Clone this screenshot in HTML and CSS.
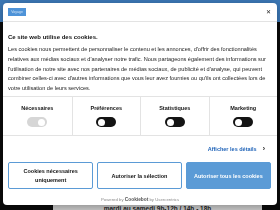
FILE: index.html
```html
<!DOCTYPE html>
<html lang="fr">
<head>
<meta charset="utf-8">
<link rel="stylesheet" href="styles.css">
</head>
<body>
<div class="page">
  <div class="site-header"></div>
  <div class="site-main"></div>
  <div class="hours">mardi au samedi 9h-12h / 14h - 18h</div>
</div>
<div class="dialog">
  <div class="dialog-header">
    <div class="logo">Voyage</div>
    <div class="close">&#x2715;</div>
  </div>
  <div class="dialog-body">
    <h2 class="title">Ce site web utilise des cookies.</h2>
    <p class="text">Les cookies nous permettent de personnaliser le contenu et les annonces, d'offrir des fonctionnalités relatives aux médias sociaux et d'analyser notre trafic. Nous partageons également des informations sur l'utilisation de notre site avec nos partenaires de médias sociaux, de publicité et d'analyse, qui peuvent combiner celles-ci avec d'autres informations que vous leur avez fournies ou qu'ils ont collectées lors de votre utilisation de leurs services.</p>
  </div>
  <div class="cats">
    <div class="cat"><span class="cat-label">Nécessaires</span><span class="toggle on disabled"></span></div>
    <div class="cat"><span class="cat-label">Préférences</span><span class="toggle"></span></div>
    <div class="cat"><span class="cat-label">Statistiques</span><span class="toggle"></span></div>
    <div class="cat"><span class="cat-label">Marketing</span><span class="toggle"></span></div>
  </div>
  <div class="details-row"><span class="details">Afficher les détails</span><span class="chev">&#x203A;</span></div>
  <div class="buttons">
    <div class="btn">Cookies nécessaires<br>uniquement</div>
    <div class="btn">Autoriser la sélection</div>
    <div class="btn primary">Autoriser tous les cookies</div>
  </div>
  <div class="powered">Powered by <b>Cookiebot</b> by Usercentrics</div>
</div>
</body>
</html>
```
FILE: styles.css
```css
html, body {
  margin: 0;
  padding: 0;
}
body {
  width: 280px;
  height: 210px;
  overflow: hidden;
  background: #0b0b0b;
  font-family: "Liberation Sans", Arial, sans-serif;
}
.page {
  display: flex;
  flex-direction: column;
  height: 210px;
}
.site-header {
  height: 22px;
  background: #3c78b6;
}
.site-main {
  flex: 1;
  background: #0b0b0b;
}
.hours {
  height: 5px;
  margin-left: 53px;
  width: 209px;
  background: #c9c9c9;
  color: #222;
  font-weight: bold;
  font-size: 6.5px;
  line-height: 8px;
  text-align: center;
  overflow: hidden;
}
.dialog {
  position: fixed;
  left: 3px;
  top: 3px;
  width: 274px;
  height: 202px;
  background: #fff;
  border-radius: 4px;
  box-shadow: 0 2px 8px rgba(0,0,0,0.3);
  display: flex;
  flex-direction: column;
  color: #141414;
  overflow: hidden;
}
.dialog-header {
  height: 18px;
  border-bottom: 1px solid #e3e3e3;
  display: flex;
  align-items: center;
  justify-content: space-between;
  padding: 0 5px;
}
.logo {
  width: 18px;
  height: 8px;
  background: #4e93d8;
  color: #cfe3f6;
  font-size: 3.5px;
  line-height: 8px;
  text-align: center;
}
.close {
  font-size: 6px;
  color: #222;
  line-height: 8px;
  margin-right: 1px;
}
.dialog-body {
  padding: 11px 5px 0;
}
.title {
  margin: 0 0 4px;
  font-size: 6px;
  line-height: 8px;
  font-weight: bold;
  color: #141414;
}
.text {
  margin: 0;
  font-size: 5.6px;
  line-height: 9.75px;
  color: #1e1e1e;
}
.cats {
  margin-top: 2.5px;
  border-top: 1px solid #e3e3e3;
  border-bottom: 1px solid #e3e3e3;
  display: grid;
  grid-template-columns: repeat(4, 1fr);
}
.cat {
  display: flex;
  flex-direction: column;
  align-items: center;
  padding: 8px 0 8px;
  gap: 5px;
}
.cat + .cat {
  border-left: 1px solid #e3e3e3;
}
.cat-label {
  font-size: 5.5px;
  line-height: 7px;
  font-weight: bold;
}
.toggle {
  width: 20px;
  height: 10px;
  border-radius: 5px;
  background: #141414;
  position: relative;
}
.toggle::after {
  content: "";
  position: absolute;
  top: 1.5px;
  left: 2px;
  width: 7px;
  height: 7px;
  border-radius: 50%;
  background: #fff;
}
.toggle.on::after {
  left: 11px;
}
.toggle.disabled {
  background: #d6d6d6;
}
.details-row {
  margin-top: 9px;
  padding-right: 12px;
  display: flex;
  justify-content: flex-end;
  align-items: center;
  gap: 6px;
  height: 8px;
}
.details {
  color: #1f63b8;
  font-weight: bold;
  font-size: 5.5px;
}
.chev {
  font-size: 7px;
  color: #141414;
  font-weight: bold;
  line-height: 8px;
}
.buttons {
  margin-top: 9px;
  padding: 0 6px 0 5px;
  display: grid;
  grid-template-columns: repeat(3, 1fr);
  gap: 3.5px;
}
.btn {
  height: 27px;
  box-sizing: border-box;
  border: 1px solid #5b9bd6;
  border-radius: 2px;
  display: flex;
  align-items: center;
  justify-content: center;
  text-align: center;
  font-size: 5.5px;
  line-height: 8.5px;
  font-weight: bold;
  color: #141414;
}
.btn.primary {
  background: #5b9bd6;
  color: #fff;
}
.powered {
  margin-top: 8px;
  text-align: center;
  font-size: 4.3px;
  line-height: 6px;
  color: #8a8a8a;
}
.powered b {
  color: #555;
  font-size: 4.8px;
}
```
